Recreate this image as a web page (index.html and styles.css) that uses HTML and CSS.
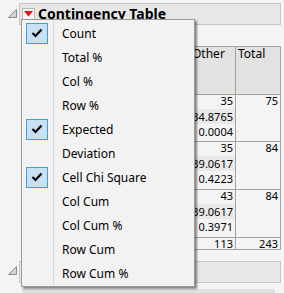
FILE: index.html
```html
<!DOCTYPE html>
<html lang="en">
<head>
    <meta charset="UTF-8">
    <title>Contingency Table</title>
    <link rel="stylesheet" href="styles.css">
</head>
<body>
    <div class="report">
        <div class="outline">
            <svg class="disclose" width="9" height="9" viewBox="0 0 9 9">
                <polygon points="0.5,8.5 8.5,8.5 8.5,0.5" fill="#d4d4d4" stroke="#8a8a8a" stroke-width="1" />
            </svg>
            <div class="title-bar">
                <span class="hot">
                    <svg width="9" height="6" viewBox="0 0 9 6">
                        <polygon points="0,0 9,0 4.5,5.5" fill="#e3140f" />
                    </svg>
                </span>
                <span class="title">Contingency Table</span>
            </div>
        </div>

        <!-- table behind the popup menu -->
        <div class="ctable">
            <div class="hd">Other</div>
            <div class="hd">Total</div>

            <div class="cell">
                <div class="line">35</div>
                <div class="line alt">34.8765</div>
                <div class="line">0.0004</div>
            </div>
            <div class="cell"><div class="line">75</div></div>

            <div class="cell">
                <div class="line">35</div>
                <div class="line alt">39.0617</div>
                <div class="line">0.4223</div>
            </div>
            <div class="cell"><div class="line">84</div></div>

            <div class="cell">
                <div class="line">43</div>
                <div class="line alt">39.0617</div>
                <div class="line">0.3971</div>
            </div>
            <div class="cell"><div class="line">84</div></div>

            <div class="cell sum">113</div>
            <div class="cell sum">243</div>
        </div>

        <div class="outline second">
            <svg class="disclose" width="9" height="9" viewBox="0 0 9 9">
                <polygon points="0.5,8.5 8.5,8.5 8.5,0.5" fill="#d4d4d4" stroke="#8a8a8a" stroke-width="1" />
            </svg>
            <div class="title-bar"></div>
        </div>

        <div class="tests-head">
            <span class="col-n">N</span>
            <span class="col-df">DF</span>
            <span class="col-ll">-LogLike</span>
            <span class="col-rs">RSquare (U)</span>
        </div>
    </div>

    <!-- popup menu from the red triangle -->
    <div class="menu">
        <div class="item checked">
            <span class="mark"><span class="box"><svg width="12" height="10" viewBox="0 0 12 10"><path d="M1.5 5 L4.5 8 L10.5 1.5" /></svg></span></span>
            <span class="label">Count</span>
        </div>
        <div class="item"><span class="mark"></span><span class="label">Total %</span></div>
        <div class="item"><span class="mark"></span><span class="label">Col %</span></div>
        <div class="item"><span class="mark"></span><span class="label">Row %</span></div>
        <div class="item checked">
            <span class="mark"><span class="box"><svg width="12" height="10" viewBox="0 0 12 10"><path d="M1.5 5 L4.5 8 L10.5 1.5" /></svg></span></span>
            <span class="label">Expected</span>
        </div>
        <div class="item"><span class="mark"></span><span class="label">Deviation</span></div>
        <div class="item checked">
            <span class="mark"><span class="box"><svg width="12" height="10" viewBox="0 0 12 10"><path d="M1.5 5 L4.5 8 L10.5 1.5" /></svg></span></span>
            <span class="label">Cell Chi Square</span>
        </div>
        <div class="item"><span class="mark"></span><span class="label">Col Cum</span></div>
        <div class="item"><span class="mark"></span><span class="label">Col Cum %</span></div>
        <div class="item"><span class="mark"></span><span class="label">Row Cum</span></div>
        <div class="item"><span class="mark"></span><span class="label">Row Cum %</span></div>
    </div>
</body>
</html>
```

FILE: styles.css
```css
body {
    margin: 0;
    width: 284px;
    height: 293px;
    overflow: hidden;
    position: relative;
    background-color: #f4f4f4;
    font-family: "Noto Sans", sans-serif;
    color: #000;
}
.report {
    padding-top: 3px;
}
.outline {
    display: flex;
    align-items: flex-start;
    height: 22px;
}
.disclose {
    flex: none;
    margin: 6px 2px 0 8px;
}
.title-bar {
    flex: 1;
    height: 22px;
    margin-right: 3px;
    box-sizing: border-box;
    border: 1px solid #c6c6c6;
    background-color: #e7e7e7;
    display: flex;
    align-items: center;
    padding-left: 2px;
}
.hot {
    width: 13px;
    height: 12px;
    box-sizing: border-box;
    border: 1px solid #b8b8b8;
    background-color: #f7f7f7;
    display: flex;
    align-items: center;
    justify-content: center;
    margin-right: 3px;
}
.title {
    font-size: 14px;
    font-weight: bold;
    line-height: 20px;
}
.ctable {
    display: grid;
    grid-template-columns: 46px 45px;
    grid-template-rows: 48px 47px 48px 48px 12px;
    width: fit-content;
    margin: 21px 0 0 189px;
    border-top: 1px solid #a3a39e;
    border-left: 1px solid #a3a39e;
}
.hd,
.cell {
    box-sizing: border-box;
    border-right: 1px solid #a3a39e;
    border-bottom: 1px solid #a3a39e;
}
.hd {
    background-color: #e2e2e0;
    font-size: 12px;
    line-height: 14px;
    padding-left: 2px;
}
.cell {
    font-size: 11px;
    line-height: 15.5px;
    text-align: right;
    padding-top: 0;
}
.cell .line:first-child {
    margin-top: -2px;
}
.line {
    padding-right: 2px;
}
.line.alt {
    background-color: #e9e9e9;
}
.cell.sum {
    line-height: 11px;
    padding-right: 2px;
}
.outline.second {
    margin-top: 11px;
}
.outline.second .disclose {
    margin-top: 5px;
}
.tests-head {
    display: flex;
    margin: 6px 9px 0 22px;
    height: 20px;
    background-color: #e1e1e1;
    font-size: 12px;
    font-weight: bold;
    line-height: 20px;
}
.tests-head span {
    text-align: right;
}
.col-n { width: 45px; }
.col-df { width: 50px; }
.col-ll { width: 65px; }
.col-rs { width: 85px; }

/* popup menu */
.menu {
    position: absolute;
    left: 21px;
    top: 19px;
    width: 174px;
    height: 268px;
    box-sizing: border-box;
    padding: 1px 0;
    border: 1px solid #999;
    background: linear-gradient(to right, transparent 31px, #d9d9d9 31px, #d9d9d9 32px, transparent 32px), #f2f2f2;
    box-shadow: 2px 2px 2px rgba(0,0,0,0.45);
}
.item {
    display: flex;
    align-items: center;
    height: 24px;
    font-size: 12px;
}
.mark {
    width: 31px;
    flex: none;
}
.box {
    display: flex;
    align-items: center;
    justify-content: center;
    width: 22px;
    height: 21px;
    margin-left: 4px;
    box-sizing: border-box;
    border: 1px solid #3d9ee0;
    background-color: #c9e0f3;
}
.box path {
    fill: none;
    stroke: #000;
    stroke-width: 2.2;
}
.label {
    padding-left: 9px;
}
```
